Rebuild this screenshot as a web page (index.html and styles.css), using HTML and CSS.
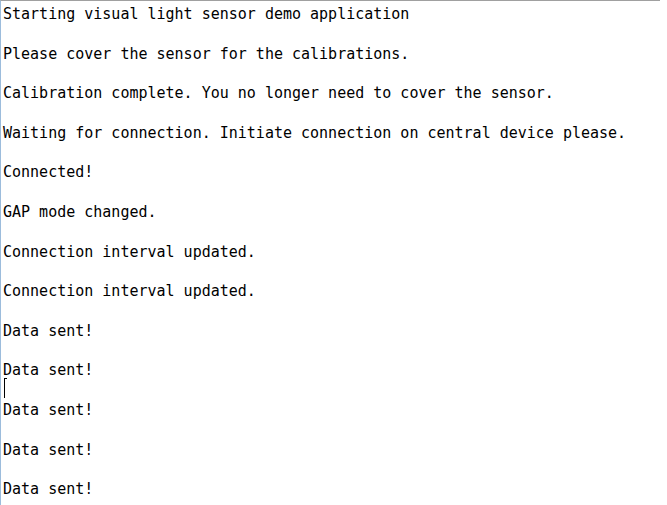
FILE: index.html
```html
<!DOCTYPE html>
<html>
<head>
<meta charset="utf-8">
<link rel="stylesheet" href="styles.css">
</head>
<body>
<div class="console">
  <div class="log">
    <p class="line">Starting visual light sensor demo application</p>
    <p class="line">Please cover the sensor for the calibrations.</p>
    <p class="line">Calibration complete. You no longer need to cover the sensor.</p>
    <p class="line">Waiting for connection. Initiate connection on central device please.</p>
    <p class="line">Connected!</p>
    <p class="line">GAP mode changed.</p>
    <p class="line">Connection interval updated.</p>
    <p class="line">Connection interval updated.</p>
    <p class="line">Data sent!</p>
    <p class="line">Data sent!</p>
    <p class="line">Data sent!</p>
    <p class="line">Data sent!</p>
    <p class="line">Data sent!</p>
  </div>
  <span class="caret"></span>
</div>
</body>
</html>
```

FILE: styles.css
```css
html, body {
  margin: 0;
  padding: 0;
  background: #ffffff;
}
.console {
  position: relative;
  width: 659px;
  height: 504px;
  border-top: 1px solid #a0a0a0;
  border-left: 1px solid #9cbcdc;
  overflow: hidden;
}
.log {
  padding: 3px 0 0 2px;
  font-family: "DejaVu Sans Mono", "Liberation Mono", monospace;
  font-size: 15px;
  color: #000000;
}
.line {
  margin: 0 0 19.6px 0;
  line-height: 20px;
  white-space: pre;
}
.caret {
  position: absolute;
  left: 3px;
  top: 377px;
  width: 1px;
  height: 20px;
  background: #000;
}
.caret::before {
  content: "";
  position: absolute;
  left: 0;
  top: 0;
  width: 3px;
  height: 1px;
  background: #000;
}
```
